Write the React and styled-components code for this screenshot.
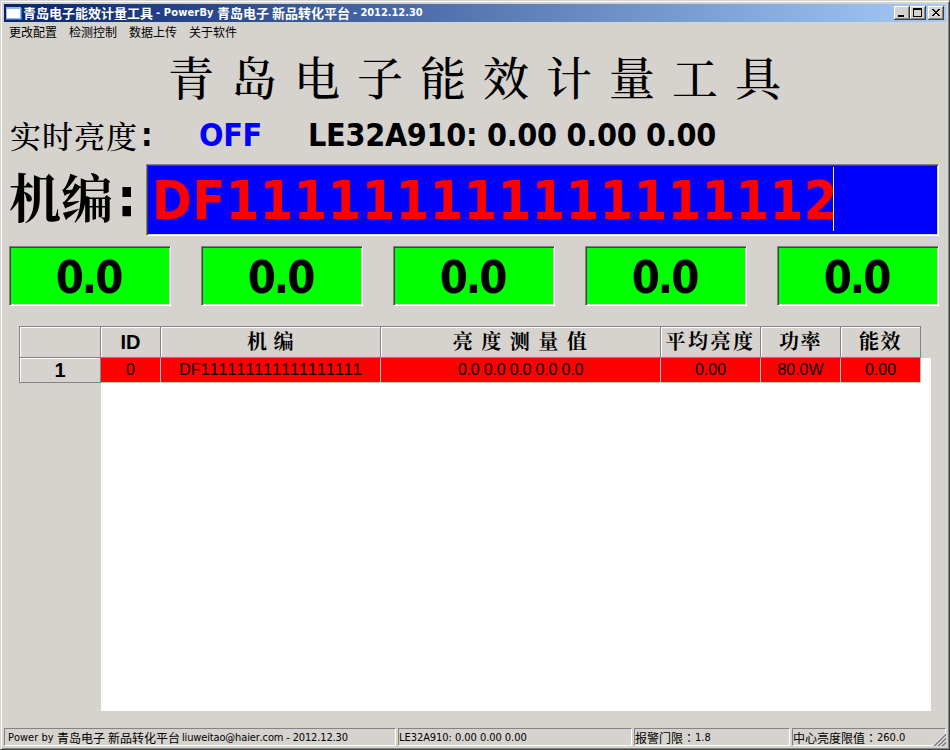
import React from "react";
import styled, { createGlobalStyle } from "styled-components";

const FACE = "#d6d3ce";
const LATIN = '"DejaVu Sans Condensed", "DejaVu Sans"';
const CJK = '"Noto Sans CJK SC"';
const SONG = '"Noto Serif CJK SC", "Noto Sans CJK SC"';

const GlobalStyle = createGlobalStyle`
  * { box-sizing: border-box; }
  body { margin: 0; background: ${FACE}; overflow: hidden; }
`;

const Window = styled.div`
  width: 950px;
  height: 750px;
  display: flex;
  flex-direction: column;
  background: ${FACE};
  color: #000;
  font: 12px ${LATIN}, ${CJK}, sans-serif;
  font-kerning: none;
  white-space: pre;
  border: 1px solid;
  border-color: ${FACE} #424142 #424142 ${FACE};
  box-shadow: inset 1px 1px #fff, inset -1px -1px #848284;
  padding: 3px;
`;

/* A stretch of text that occupies a fixed advance width. */
const Run = styled.span`
  flex: none;
  width: ${(p) => (p.$w ? `${p.$w}px` : "auto")};
  letter-spacing: ${(p) => p.$ls || 0}px;
  font-family: ${(p) => (p.$cjk ? CJK : LATIN)}, sans-serif;
  font-size: ${(p) => (p.$size ? `${p.$size}px` : "inherit")};
`;

/* Full-width colon centred in its cell. */
const WideColon = styled.span`
  flex: none;
  width: 12px;
  font: 12px/17px "Noto Sans CJK TC", sans-serif;
`;

const TitleBar = styled.header`
  flex: none;
  display: flex;
  align-items: center;
  width: 942px;
  height: 18px;
  padding: 0 2px;
  background: linear-gradient(90deg, #08246b, #a5cbf7);
  color: #fff;
  font-weight: bold;
  font-size: 11px;
  line-height: 18px;
`;

const AppIcon = styled.svg`
  flex: none;
  width: 16px;
  height: 16px;
  margin-right: 1px;
`;

const Controls = styled.div`
  display: flex;
  margin-left: auto;
`;

const ControlButton = styled.button`
  width: 16px;
  height: 14px;
  padding: 0;
  border: 0;
  display: block;
  margin-left: ${(p) => p.$gap || 0}px;
  background: ${FACE};
  box-shadow: inset -1px -1px #424142, inset 1px 1px #fff, inset -2px -2px #848284;
  svg { display: block; }
`;

const MenuBar = styled.nav`
  flex: none;
  display: flex;
  gap: 12px;
  height: 20px;
  padding-left: 5px;
  line-height: 19px;
  font-size: 12px;
`;

const MenuItem = styled.span`
  width: 48px;
  font-family: ${CJK}, sans-serif;
`;

const Heading = styled.h1`
  flex: none;
  margin: 0;
  height: 72px;
  padding-left: 164px;
  font: 500 46px/67px ${SONG}, serif;
  letter-spacing: 17px;
`;

const Realtime = styled.section`
  flex: none;
  display: flex;
  height: 50px;
  padding-left: 6px;
  line-height: 42px;
  font-size: 32px;
  font-weight: bold;
`;

const RealtimeLabel = styled.span`
  width: 131px;
  font: 500 31px/41px ${SONG}, serif;
  letter-spacing: 1px;
`;

const State = styled.span`
  width: 109px;
  margin-left: 42px;
  letter-spacing: -0.3px;
  color: #00f;
`;

const Serial = styled.section`
  flex: none;
  display: flex;
  height: 72px;
  padding-left: 5px;
  line-height: 68px;
  font-weight: bold;
`;

const SerialLabel = styled.label`
  display: flex;
  width: 137px;
  font-size: 54px;
`;

const SerialName = styled.span`
  width: 108px;
  font: 700 52px/64px ${SONG}, serif;
`;

const sunken = `
  border: 1px solid;
  border-color: #848284 #fff #fff #848284;
  box-shadow: inset 1px 1px #424142, inset -1px -1px ${FACE};
`;

const SerialField = styled.div`
  ${sunken}
  display: flex;
  width: 793px;
  height: 72px;
  padding: 2px 4px 3px 5px;
  background-color: #00f;
  color: #f00;
  font-size: 53.5px;
  line-height: 68px;
`;

const Caret = styled.i`
  flex: none;
  width: 1px;
  height: 64px;
  background: #ff0;
`;

const Readings = styled.section`
  flex: none;
  display: flex;
  gap: 30px;
  height: 90px;
  padding: 10px 0 0 5px;
`;

const Reading = styled.div`
  ${sunken}
  width: 162px;
  height: 60px;
  padding: 1px 3px 0 0;
  background-color: #0f0;
  font-size: 45px;
  font-weight: bold;
  line-height: 60px;
  letter-spacing: -2px;
  text-align: center;
`;

const TableArea = styled.section`
  flex: none;
  height: 385px;
  margin: 0 15px;
  width: 912px;
  background: linear-gradient(#fff, #fff) 82px 32px / 830px 353px no-repeat;
`;

const Grid = styled.div`
  display: grid;
  grid-template-columns: 82px 60px 220px 280px 100px 80px 80px;
  grid-template-rows: 32px 25px;
  width: 902px;
`;

const HeadCell = styled.div`
  border: solid #848284;
  border-width: ${(p) => (p.$side ? "0" : "1px")} 1px 1px ${(p) => (p.$first ? "1px" : "0")};
  box-shadow: inset 1px 1px #fff;
  background-color: ${FACE};
  font: bold 20px/30px "Liberation Sans", ${SONG}, sans-serif;
  letter-spacing: ${(p) => p.$ls || 0}px;
  text-align: center;
  overflow: hidden;
`;

const RowHead = styled(HeadCell)`
  line-height: 25px;
`;

const Cell = styled.div`
  border: solid #c6c3c6;
  border-width: 0 1px 1px 0;
  background-color: #f00;
  font: 16px/24px "Liberation Sans", Arial, sans-serif;
  font-kerning: none;
  letter-spacing: ${(p) => p.$ls || 0}px;
  text-align: center;
`;

const StatusBar = styled.footer`
  flex: none;
  display: flex;
  gap: 2px;
  margin-top: 17px;
  height: 18px;
  width: 942px;
  position: relative;
  font-size: 11px;
  line-height: 17px;
`;

const Pane = styled.div`
  display: flex;
  width: ${(p) => p.$w}px;
  height: 18px;
  padding-left: ${(p) => p.$pad || 0}px;
  border: 1px solid;
  border-color: #848284 #fff #fff #848284;
`;

const Grip = styled.svg`
  position: absolute;
  right: 0;
  bottom: 0;
`;

const columns = [
  ["ID", 0],
  ["机 编", 0.5],
  ["亮 度 测 量 值", 1.5],
  ["平均亮度", 2.5],
  ["功率", 1.5],
  ["能效", 1.5],
];

const row = [
  ["0", 0],
  ["DF111111111111111111", 0.05],
  ["0.0 0.0 0.0 0.0 0.0", -0.2],
  ["0.00", 0],
  ["80.0W", 0],
  ["0.00", 0],
];

export default function App() {
  return (
    <Window>
      <GlobalStyle />
      <TitleBar>
        <AppIcon viewBox="0 0 16 16" shapeRendering="crispEdges">
          <path d="M0 3h16v12H0z" fill="#3871a8" />
          <path d="M0 2h15v12H0z" fill="#8fb9e8" />
          <path d="M1 4h13v9H1z" fill="#fff" />
        </AppIcon>
        <Run $cjk $size={13} $w={133}>青岛电子能效计量工具</Run>
        <Run $w={61} $ls={0.15}>- PowerBy</Run>
        <Run $cjk $size={13} $w={55}>青岛电子</Run>
        <Run $cjk $size={13} $w={81}>新品转化平台</Run>
        <Run $ls={-0.05}>- 2012.12.30</Run>
        <Controls>
          <ControlButton aria-label="Minimize">
            <svg width="16" height="14"><path d="M4 9h6v2H4z" /></svg>
          </ControlButton>
          <ControlButton aria-label="Maximize">
            <svg width="16" height="14" shapeRendering="crispEdges">
              <path d="M3 2h9v9H3zM4 4v6h7V4z" fillRule="evenodd" />
            </svg>
          </ControlButton>
          <ControlButton aria-label="Close" $gap={2}>
            <svg width="16" height="14" shapeRendering="crispEdges">
              <path d="M4 3h2v1h1v1h2V4h1V3h2v1h-1v1h-1v1H9v1h1v1h1v1h1v1h-2V9H9V8H7v1H6v1H4V9h1V8h1V7h1V6H6V5H5V4H4z" />
            </svg>
          </ControlButton>
        </Controls>
      </TitleBar>
      <MenuBar>
        <MenuItem>更改配置</MenuItem>
        <MenuItem>检测控制</MenuItem>
        <MenuItem>数据上传</MenuItem>
        <MenuItem>关于软件</MenuItem>
      </MenuBar>
      <Heading>青岛电子能效计量工具</Heading>
      <Realtime>
        <RealtimeLabel>实时亮度</RealtimeLabel>
        <Run $w={16}>:</Run>
        <State>OFF</State>
        <Run $ls={-0.3}>LE32A910: 0.00 0.00 0.00</Run>
      </Realtime>
      <Serial>
        <SerialLabel>
          <SerialName>机编</SerialName>
          <Run>:</Run>
        </SerialLabel>
        <SerialField>
          <Run $w={681} $ls={0.5}>DF111111111111111112</Run>
          <Caret />
        </SerialField>
      </Serial>
      <Readings>
        {[0, 1, 2, 3, 4].map((i) => (
          <Reading key={i}>0.0</Reading>
        ))}
      </Readings>
      <TableArea>
        <Grid>
          <HeadCell $first />
          {columns.map(([label, ls]) => (
            <HeadCell key={label} $ls={ls}>{label}</HeadCell>
          ))}
          <RowHead $first $side>1</RowHead>
          {row.map(([value, ls], i) => (
            <Cell key={i} $ls={ls}>{value}</Cell>
          ))}
        </Grid>
      </TableArea>
      <StatusBar>
        <Pane $w={392} $pad={3}>
          <Run $w={49}>Power by</Run>
          <Run $cjk $size={12} $w={51}>青岛电子</Run>
          <Run $cjk $size={12} $w={74}>新品转化平台</Run>
          <Run $ls={-0.15}>liuweitao@haier.com - 2012.12.30</Run>
        </Pane>
        <Pane $w={234}>
          <Run $ls={-0.05}>LE32A910: 0.00 0.00 0.00</Run>
        </Pane>
        <Pane $w={156}>
          <Run $cjk $size={12} $w={48}>报警门限</Run>
          <WideColon>：</WideColon>
          <Run>1.8</Run>
        </Pane>
        <Pane $w={154}>
          <Run $cjk $size={12} $w={72}>中心亮度限值</Run>
          <WideColon>：</WideColon>
          <Run>260.0</Run>
        </Pane>
        <Grip width="13" height="13">
          <path d="M0 13h13V0z" fill={FACE} />
          <path d="M1 13L13 1M5 13l8-8M9 13l4-4" stroke="#848284" strokeWidth="2" />
          <path d="M0 12.500L12.500 0M4 12.500l9-9M8 12.500l5-5" stroke="#fff" />
        </Grip>
      </StatusBar>
    </Window>
  );
}
